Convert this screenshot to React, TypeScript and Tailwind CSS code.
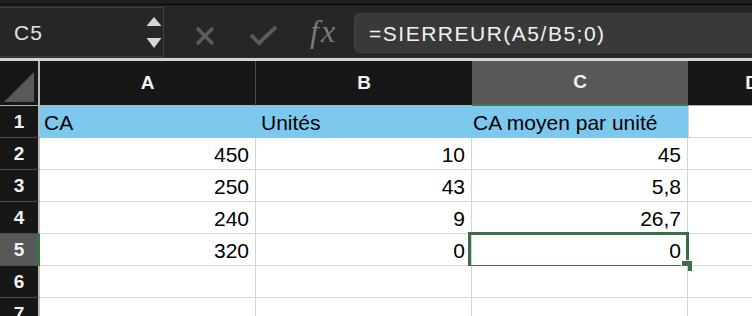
import React from 'react';

const rows: string[][] = [
    ['450', '10', '45'],
    ['250', '43', '5,8'],
    ['240', '9', '26,7'],
    ['320', '0', '0'],
    ['', '', ''],
    ['', '', ''],
];

function Toolbar() {
    return (
        <div>
            <div className="h-[5px] bg-[#1e1e1e] border-b border-[#050505]" />
            <div className="h-[52px] bg-[#262626] flex items-start">
                {/* Name box */}
                <div className="w-[164px] h-[50px] mt-[2px] shrink-0 border-y border-r border-[#3f3f3f] flex items-center justify-between pl-[14px] pr-[1px]">
                    <span className="text-[21px] tracking-[1px] text-[#e4e4e4] leading-none">C5</span>
                    <svg width="16" height="48" viewBox="0 0 16 48">
                        <polygon points="8,9 15.5,18 0.5,18" fill="#d6d6d6" />
                        <polygon points="0.5,30 15.5,30 8,40" fill="#d6d6d6" />
                    </svg>
                </div>

                <svg className="ml-[31px] mt-[21px] shrink-0" width="20" height="20" viewBox="0 0 20 20">
                    <path d="M2 2 L18 18 M18 2 L2 18" stroke="#5b5b5b" strokeWidth="3.6" strokeLinecap="butt" />
                </svg>

                <svg className="ml-[34px] mt-[20px] shrink-0" width="29" height="22" viewBox="0 0 29 22">
                    <path d="M2 10 L10 18 L27 2" stroke="#5b5b5b" strokeWidth="3.8" fill="none" />
                </svg>

                <div className="ml-[32px] h-[52px] flex items-center shrink-0">
                    <span className="font-['Liberation_Serif',serif] italic text-[32px] leading-[32px] text-[#7b7b7b] tracking-[2px]">
                        fx
                    </span>
                </div>

                {/* Formula bar */}
                <div className="ml-[17px] flex-1 h-[40px] mt-[8px] bg-[#393939] rounded-l-[6px] border border-r-0 border-[#434343] pl-[14px] flex items-center">
                    <span className="text-[21px] tracking-[1.5px] text-[#f2f2f2] leading-none">=SIERREUR(A5/B5;0)</span>
                </div>
            </div>
            <div className="h-[1px] bg-[#2e2e2e]" />
            <div className="h-[3px] bg-[#d3d3d3]" />
        </div>
    );
}

function HeaderRow() {
    return (
        <div className="flex h-[45px]">
            <div className="w-[40px] shrink-0 bg-[#171717] border-r-2 border-r-[#b8b8b8] border-b border-b-[#b0b0b0] flex items-start pt-[11px] pl-[4px]">
                <svg width="31" height="30" viewBox="0 0 31 30">
                    <polygon points="30,0 30,30 0,30" fill="#595959" />
                </svg>
            </div>
            <div className="w-[216px] shrink-0 bg-[#171717] border-r border-r-[#4a4a4a] border-b border-b-[#b0b0b0] flex items-center justify-center text-[19px] font-bold text-[#f2f2f2]">
                A
            </div>
            <div className="w-[216px] shrink-0 bg-[#171717] border-b border-b-[#b0b0b0] flex items-center justify-center text-[19px] font-bold text-[#f2f2f2]">
                B
            </div>
            <div className="w-[216px] shrink-0 bg-[#585858] border-b-2 border-b-[#3d7a4e] flex items-center justify-center text-[19px] font-bold text-[#f2f2f2]">
                C
            </div>
            <div className="w-[128px] shrink-0 bg-[#171717] border-b border-b-[#b0b0b0] flex items-center justify-center text-[19px] font-bold text-[#f2f2f2]">
                D
            </div>
        </div>
    );
}

function TitleRow() {
    return (
        <div className="flex h-[32px]">
            <div className="w-[40px] shrink-0 bg-[#171717] border-r-2 border-r-[#b8b8b8] border-b border-b-[#4d4d4d] flex items-center justify-center pt-[2px] text-[19px] font-bold text-[#f2f2f2]">
                1
            </div>
            <div className="w-[216px] shrink-0 bg-[#7cc8ee] pl-[4px] flex items-center pt-[1px] text-[21px] text-black">CA</div>
            <div className="w-[216px] shrink-0 bg-[#7cc8ee] pl-[5px] flex items-center pt-[1px] text-[21px] text-black">Unités</div>
            <div className="w-[216px] shrink-0 bg-[#7cc8ee] pl-[1px] flex items-center pt-[1px] text-[21px] text-black whitespace-nowrap">
                CA moyen par unité
            </div>
            <div className="w-[128px] shrink-0 bg-white border-l border-[#d4d4d4] border-b" />
        </div>
    );
}

function DataRow({ n, values }: { n: number; values: string[] }) {
    const active = n === 5;
    return (
        <div className="flex h-[32px]">
            <div
                className={`w-[40px] shrink-0 border-b border-b-[#4d4d4d] flex items-center justify-center pt-[2px] text-[19px] font-bold text-[#f2f2f2] ${
                    active ? 'bg-[#575757] border-r-[4px] border-r-[#3c6e47] pl-[2px]' : 'bg-[#171717] border-r-2 border-r-[#b8b8b8]'
                }`}
            >
                {n}
            </div>
            {values.map((v, i) => (
                <div
                    key={i}
                    className="relative w-[216px] shrink-0 bg-white border-r border-b border-[#d4d4d4] flex items-center justify-end pr-[6px] pt-[3px] text-[21px] text-black"
                >
                    {v}
                    {active && i === 2 && (
                        <>
                            <div className="absolute left-[-4px] top-[-2px] w-[221px] h-[36px] border-[3px] border-[#3c6e47]" />
                            <div className="absolute left-[209px] top-[26px] w-[12px] h-[12px] bg-[#3c6e47] border border-white" />
                        </>
                    )}
                </div>
            ))}
            <div className="w-[128px] shrink-0 bg-white border-b border-[#d4d4d4]" />
        </div>
    );
}

export default function App() {
    return (
        <div className="w-[752px] h-[316px] overflow-hidden bg-white font-['Liberation_Sans',Arial,sans-serif]">
            <Toolbar />
            <div className="w-[816px]">
                <HeaderRow />
                <TitleRow />
                {rows.map((r, i) => (
                    <DataRow key={i} n={i + 2} values={r} />
                ))}
            </div>
        </div>
    );
}
